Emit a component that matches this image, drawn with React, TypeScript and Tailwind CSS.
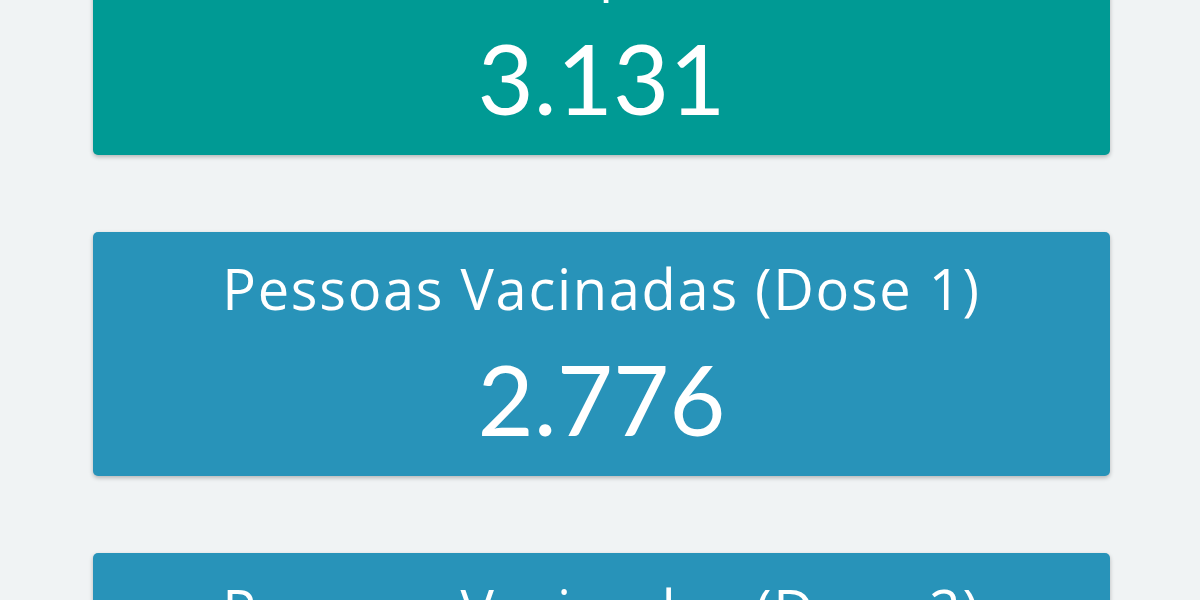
const CARDS = [
  { title: "Doses Aplicadas", value: "3.131", color: "bg-[#009a94]" },
  { title: "Pessoas Vacinadas (Dose 1)", value: "2.776", color: "bg-[#2893b9]" },
  { title: "Pessoas Vacinadas (Dose 2)", value: "355", color: "bg-[#2893b9]" },
];

function StatCard({ title, value, color }: { title: string; value: string; color: string }) {
  return (
    <div
      className={`${color} h-[244px] rounded-[5px] shadow-[0_2px_4px_rgba(0,0,0,0.25)] flex flex-col items-center text-white font-['Open_Sans','Lato',sans-serif]`}
    >
      <div className="mt-[20px] text-[56px] leading-[72px] tracking-[1.7px]">{title}</div>
      <div className="mt-[20px] text-[97px] leading-[110px] font-['Lato','Open_Sans',sans-serif]">{value}</div>
    </div>
  );
}

export default function App() {
  return (
    <div className="h-[600px] overflow-hidden bg-[#f0f3f4]">
      <div className="-mt-[89px] pl-[93px] pr-[90px] flex flex-col gap-[77px]">
        {CARDS.map((c) => (
          <StatCard key={c.title} {...c} />
        ))}
      </div>
    </div>
  );
}
